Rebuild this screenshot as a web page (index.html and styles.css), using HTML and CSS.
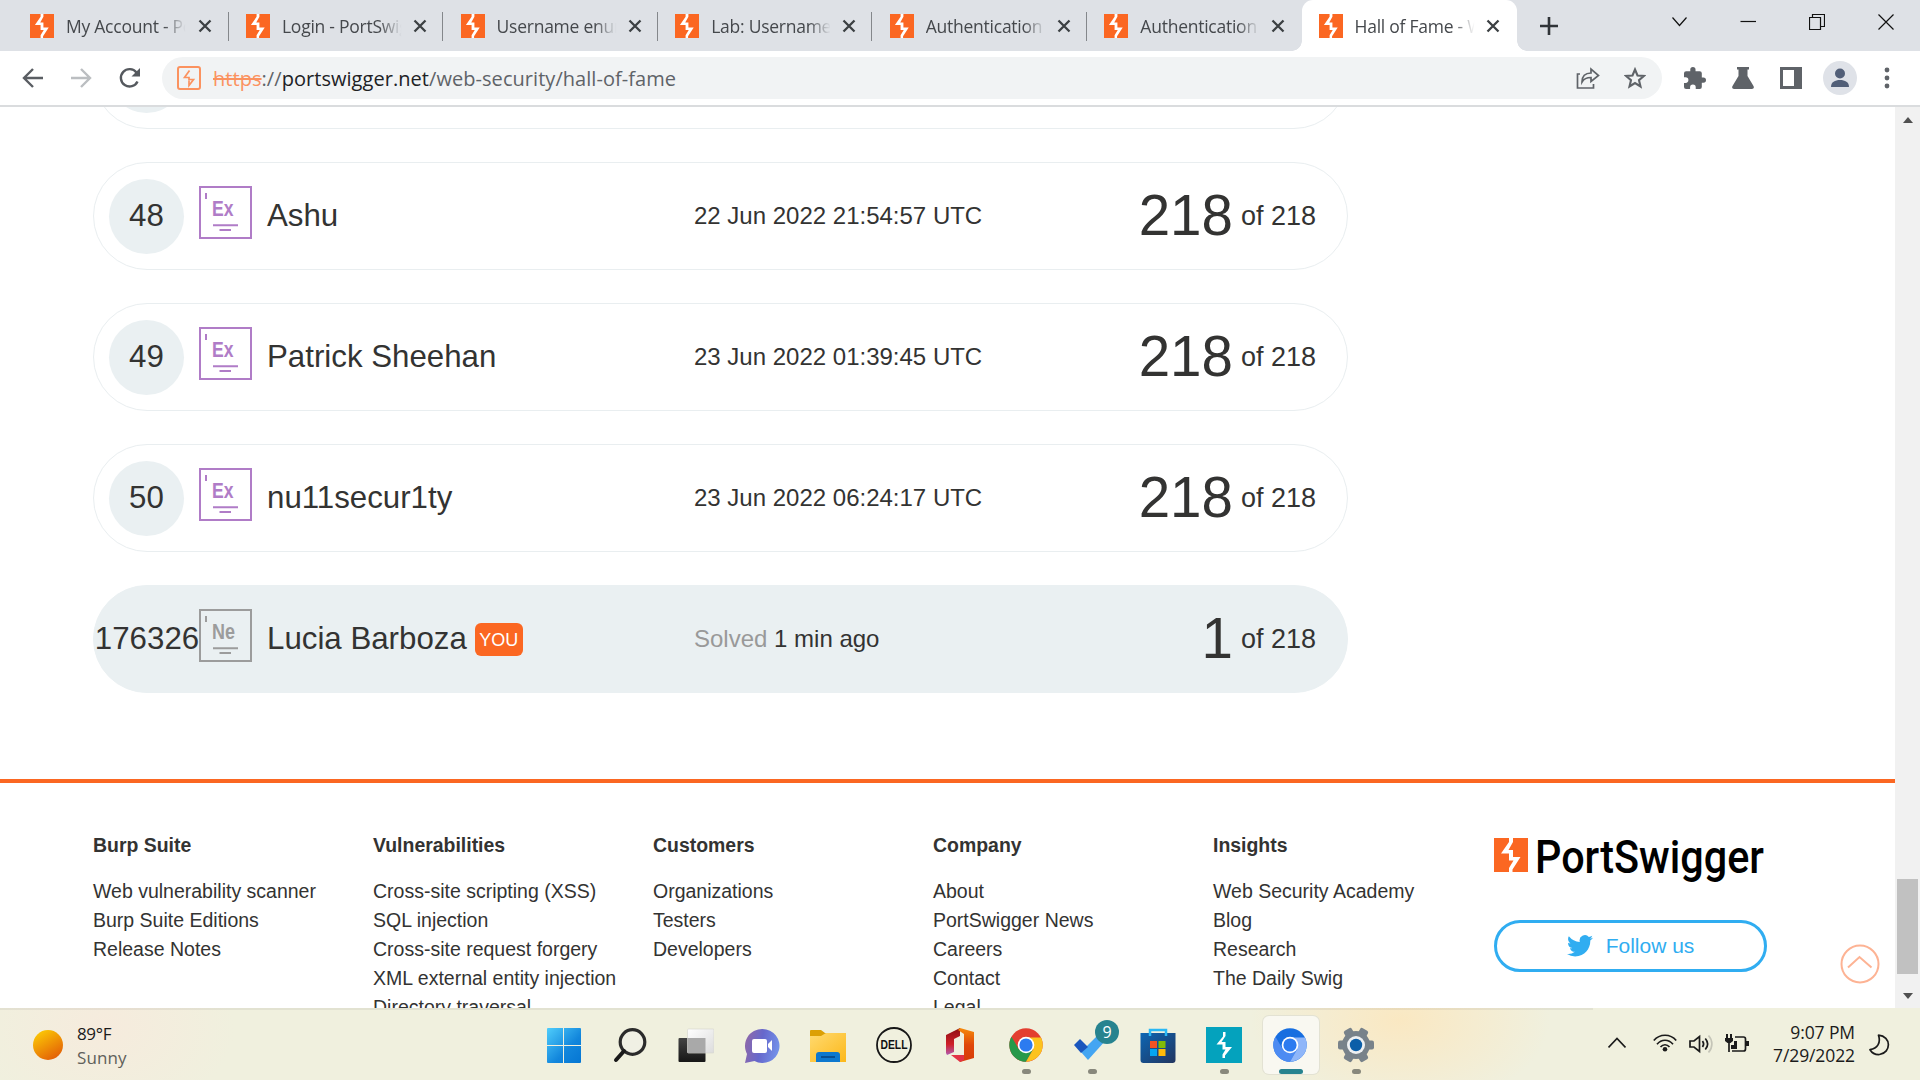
FILE: index.html
```html
<!DOCTYPE html>
<html lang="en">
<head>
<meta charset="utf-8">
<title>Hall of Fame - Web Security Academy</title>
<link rel="stylesheet" href="styles.css">
</head>
<body>
<svg class="defs" width="0" height="0">
  <defs>
    <symbol id="logo" viewBox="0 0 34 34" preserveAspectRatio="none">
      <rect width="34" height="34" fill="#fb6722"/>
      <path fill="#fff" d="M15 0h4v4l-4.500 8H19v7h7.500l-8 12.500V34H15v-4l4.500-7.500H15v-7H7L15 4z"/>
    </symbol>
    <symbol id="close" viewBox="0 0 14 14"><path d="M1.500 1.500l11 11M12.500 1.500l-11 11" stroke="#3c4043" stroke-width="2.300"/></symbol>
    <symbol id="ex" viewBox="0 0 53 53">
      <rect x="1" y="1" width="51" height="51" fill="none" stroke="currentColor" stroke-width="2"/>
      <path fill="currentColor" d="M6 7h2v6H6zM14 38.300h25v2H14zM20.500 43h11.500v2H20.500z"/>
    </symbol>
    <linearGradient id="gsun" x1=".2" y1="0" x2=".8" y2="1"><stop offset="0" stop-color="#fccb05"/><stop offset="1" stop-color="#e25a07"/></linearGradient>
    <linearGradient id="gwin" x1="0" y1="0" x2="1" y2="1"><stop offset="0" stop-color="#4fcdfb"/><stop offset=".6" stop-color="#1286dc"/><stop offset="1" stop-color="#0576d3"/></linearGradient>
    <linearGradient id="gchat" x1="0" y1=".2" x2="1" y2=".4"><stop offset="0" stop-color="#9068a8"/><stop offset=".5" stop-color="#6668cc"/><stop offset="1" stop-color="#7390e8"/></linearGradient>
    <linearGradient id="gfold" x1="0" y1="0" x2="1" y2="1"><stop offset="0" stop-color="#ffda70"/><stop offset="1" stop-color="#fcb81a"/></linearGradient>
    <linearGradient id="gstore" x1="0" y1="0" x2="1" y2="1"><stop offset="0" stop-color="#0c66b4"/><stop offset="1" stop-color="#22355f"/></linearGradient>
    <linearGradient id="goff" x1="0" y1="0" x2="0" y2="1"><stop offset="0" stop-color="#f58a0a"/><stop offset=".5" stop-color="#e0470a"/><stop offset="1" stop-color="#d63c08"/></linearGradient>
    <linearGradient id="goffl" x1="0" y1="0" x2="0" y2="1"><stop offset="0" stop-color="#8c0f14"/><stop offset=".6" stop-color="#cf2028"/><stop offset="1" stop-color="#b25bb0"/></linearGradient>
    <linearGradient id="gtask" x1="0" y1="0" x2="0" y2="1"><stop offset="0" stop-color="#444"/><stop offset="1" stop-color="#161616"/></linearGradient>
    <linearGradient id="gpane" x1="0" y1="0" x2="1" y2="1"><stop offset="0" stop-color="#fff"/><stop offset="1" stop-color="#dcdcdc"/></linearGradient>
  </defs>
</svg>

<header class="tabstrip">
  <div class="tab first"><svg class="fav"><use href="#logo"/></svg><span class="title">My Account - PortSwigger</span><svg class="x"><use href="#close"/></svg></div>
  <div class="tab"><svg class="fav"><use href="#logo"/></svg><span class="title">Login - PortSwigger</span><svg class="x"><use href="#close"/></svg></div>
  <div class="tab"><svg class="fav"><use href="#logo"/></svg><span class="title">Username enumeration</span><svg class="x"><use href="#close"/></svg></div>
  <div class="tab"><svg class="fav"><use href="#logo"/></svg><span class="title">Lab: Username enum</span><svg class="x"><use href="#close"/></svg></div>
  <div class="tab"><svg class="fav"><use href="#logo"/></svg><span class="title">Authentication vuln</span><svg class="x"><use href="#close"/></svg></div>
  <div class="tab last"><svg class="fav"><use href="#logo"/></svg><span class="title">Authentication vuln</span><svg class="x"><use href="#close"/></svg></div>
  <div class="tab active"><svg class="fav"><use href="#logo"/></svg><span class="title">Hall of Fame - Web</span><svg class="x"><use href="#close"/></svg></div>
  <svg class="plus" width="18" height="18" viewBox="0 0 18 18"><path d="M9 0v18M0 9h18" stroke="#303438" stroke-width="2.600"/></svg>
  <div class="winctl">
    <svg width="16" height="16" viewBox="0 0 16 16"><path d="M1.500 3.500l7 8 7-8"/></svg>
    <svg width="16" height="16" viewBox="0 0 16 16"><path d="M.5 7.500h15.500"/></svg>
    <svg width="16" height="16" viewBox="0 0 16 16"><path d="M.5 3.500h11v12H.5zM3.500 3.500v-3h12v12h-4"/></svg>
    <svg width="16" height="16" viewBox="0 0 16 16"><path d="M.5.5l15 15M15.500.5l-15 15"/></svg>
  </div>
</header>

<div class="toolbar">
  <svg class="nav" width="22" height="20" viewBox="0 0 22 20"><path d="M21 10H2M11 1l-9 9 9 9" fill="none" stroke="#5a5e63" stroke-width="2.400"/></svg>
  <svg class="nav" width="22" height="20" viewBox="0 0 22 20"><path d="M1 10h19M11 1l9 9-9 9" fill="none" stroke="#bbbec1" stroke-width="2.400"/></svg>
  <svg class="nav" width="22" height="22" viewBox="0 0 22 22"><path d="M19.500 14.500a8.700 8.700 0 1 1-1-9" fill="none" stroke="#55595e" stroke-width="2.400"/><path d="M22 1v8.500h-8.500z" fill="#55595e"/></svg>
  <div class="omnibox">
    <svg width="24" height="24" viewBox="0 0 24 24"><rect x="1" y="1" width="22" height="22" rx="2" fill="none" stroke="#fb925f" stroke-width="2"/><path d="M12.500 4.500L7.500 11.500h4.500v2h4.500L12 19.500v-5" fill="none" stroke="#fb925f" stroke-width="1.700"/></svg>
    <span class="url"><s>https</s>://<b>portswigger.net</b>/web-security/hall-of-fame</span>
    <svg width="24" height="22" viewBox="0 0 24 22"><path d="M4 7H1.500v14h16v-4M6 15c0-6 3-9 9-9V2l7.500 6.500L15 14.500V10.500c-4 0-7 1-9 4.500z" fill="none" stroke="#5f6368" stroke-width="1.700"/></svg>
    <svg width="22" height="22" viewBox="0 0 22 22"><path d="M11 2.500l2.500 6 6.300.5-4.800 4.200 1.500 6.300L11 16l-5.500 3.500L7 13.200 2.200 9l6.300-.5z" fill="none" stroke="#5f6368" stroke-width="2.100"/></svg>
  </div>
  <div class="actions">
    <svg width="22" height="22" viewBox="2 1 21 21"><path fill="#5f6368" d="M20.500 11H19V7a2 2 0 0 0-2-2h-4V3.500a2.500 2.500 0 0 0-5 0V5H4a2 2 0 0 0-2 2v3.800h1.500a2.700 2.700 0 0 1 0 5.400H2V20a2 2 0 0 0 2 2h3.800v-1.500a2.700 2.700 0 0 1 5.400 0V22H17a2 2 0 0 0 2-2v-4h1.500a2.500 2.500 0 0 0 0-5z"/></svg>
    <svg width="22" height="22" viewBox="0 0 22 22"><path fill="#5f6368" d="M5 0h12v2.500h-1.500V9l6 10c1 2-.2 3-1.500 3H2C.7 22-.5 21 .5 19l6-10V2.500H5z"/></svg>
    <svg width="22" height="22" viewBox="0 0 22 22"><path fill="#5f6368" fill-rule="evenodd" d="M0 0h22v22H0zM3 3v16h11V3z"/></svg>
    <svg width="34" height="34" viewBox="0 0 34 34"><circle cx="17" cy="17" r="17" fill="#dfe2e8"/><circle cx="17" cy="12.500" r="5" fill="#525f78"/><path d="M8 26c0-5 4-7 9-7s9 2 9 7z" fill="#525f78"/></svg>
    <svg width="6" height="22" viewBox="0 0 6 22"><g fill="#5f6368"><circle cx="3" cy="3" r="2.400"/><circle cx="3" cy="11" r="2.400"/><circle cx="3" cy="19" r="2.400"/></g></svg>
  </div>
</div>

<div class="viewport">
  <main class="page">
    <div class="board">
      <div class="row"><div class="rank"></div></div>
      <div class="row"><div class="rank">48</div><svg class="level"><use href="#ex"/><text x="13" y="30" textLength="21.500" lengthAdjust="spacingAndGlyphs">Ex</text></svg><div class="name">Ashu</div><div class="date">22 Jun 2022 21:54:57 UTC</div><div class="count"><span class="big">218</span><span>of 218</span></div></div>
      <div class="row"><div class="rank">49</div><svg class="level"><use href="#ex"/><text x="13" y="30" textLength="21.500" lengthAdjust="spacingAndGlyphs">Ex</text></svg><div class="name">Patrick Sheehan</div><div class="date">23 Jun 2022 01:39:45 UTC</div><div class="count"><span class="big">218</span><span>of 218</span></div></div>
      <div class="row"><div class="rank">50</div><svg class="level"><use href="#ex"/><text x="13" y="30" textLength="21.500" lengthAdjust="spacingAndGlyphs">Ex</text></svg><div class="name">nu11secur1ty</div><div class="date">23 Jun 2022 06:24:17 UTC</div><div class="count"><span class="big">218</span><span>of 218</span></div></div>
      <div class="row you"><div class="rank">176326</div><svg class="level"><use href="#ex"/><text x="13" y="30" textLength="23" lengthAdjust="spacingAndGlyphs">Ne</text></svg><div class="name">Lucia Barboza<span class="tag">YOU</span></div><div class="date"><i>Solved</i> 1 min ago</div><div class="count"><span class="big">1</span><span>of 218</span></div></div>
    </div>
    <footer class="footer">
      <div class="col"><h3>Burp Suite</h3><a>Web vulnerability scanner</a><a>Burp Suite Editions</a><a>Release Notes</a></div>
      <div class="col"><h3>Vulnerabilities</h3><a>Cross-site scripting (XSS)</a><a>SQL injection</a><a>Cross-site request forgery</a><a>XML external entity injection</a><a>Directory traversal</a></div>
      <div class="col"><h3>Customers</h3><a>Organizations</a><a>Testers</a><a>Developers</a></div>
      <div class="col"><h3>Company</h3><a>About</a><a>PortSwigger News</a><a>Careers</a><a>Contact</a><a>Legal</a></div>
      <div class="col"><h3>Insights</h3><a>Web Security Academy</a><a>Blog</a><a>Research</a><a>The Daily Swig</a></div>
      <div class="brand">
        <svg width="273" height="46" viewBox="0 0 273 46"><use href="#logo" width="34" height="34"/><text class="wordmark" x="41" y="34.500" textLength="229" lengthAdjust="spacingAndGlyphs">PortSwigger</text></svg>
        <div class="follow"><svg width="26" height="22" viewBox="0 0 24 20"><path fill="#30adf1" d="M24 2.400a10 10 0 0 1-2.800.8A5 5 0 0 0 23.300.5a10 10 0 0 1-3.100 1.200A4.900 4.900 0 0 0 11.800 6.200 14 14 0 0 1 1.700 1a4.900 4.900 0 0 0 1.500 6.600A5 5 0 0 1 1 7a4.900 4.900 0 0 0 3.900 4.900 5 5 0 0 1-2.200.1 4.900 4.900 0 0 0 4.600 3.400A9.900 9.900 0 0 1 0 17.400a14 14 0 0 0 7.500 2.200c9 0 14-7.500 14-14v-.6A10 10 0 0 0 24 2.400z"/></svg>Follow us</div>
      </div>
    </footer>
    <svg class="totop" width="40" height="40" viewBox="0 0 40 40"><circle cx="20" cy="20" r="18.500" fill="#fff" stroke="#fdb394" stroke-width="2"/><path d="M8 23.500L19.500 13 31.500 23.500" fill="none" stroke="#fdb394" stroke-width="2"/></svg>
  </main>
  <div class="scrollbar"><i class="up"></i><i class="thumb"></i><i class="down"></i></div>
</div>

<div class="taskbar">
  <div class="weather">
    <svg width="30" height="30" viewBox="0 0 30 30"><circle cx="15" cy="15" r="15" fill="url(#gsun)"/></svg>
    <div>89°F<br><span>Sunny</span></div>
  </div>
  <div class="apps">
    <div class="app"><svg viewBox="0 0 36 36"><path fill="url(#gwin)" d="M2 1h15v17H1V2a1 1 0 0 1 1-1zM18 1h16a1 1 0 0 1 1 1v16H18zM1 19h16v17H2a1 1 0 0 1-1-1zM18 19h17v16a1 1 0 0 1-1 1H18z"/></svg></div>
    <div class="app"><svg viewBox="0 0 36 36"><circle cx="20.500" cy="15" r="12.300" fill="#f0f0e4" stroke="#2b2b2b" stroke-width="3.200"/><path d="M12 24l-8 9" stroke="#1a1a1a" stroke-width="4" stroke-linecap="round"/></svg></div>
    <div class="app"><svg viewBox="0 0 36 36"><rect x=".5" y="11" width="27" height="24" rx="1" fill="url(#gtask)"/><rect x="9.500" y="2" width="26.500" height="24" rx="1" fill="url(#gpane)" stroke="#d8d8d0" stroke-width=".7"/><path d="M9.500 11h18v15h-18z" fill="#a9a9a9"/></svg></div>
    <div class="app"><svg viewBox="0 0 36 36"><path fill="url(#gchat)" d="M18.500 2a17 17 0 1 1-8 32L1 36l2-9A17 17 0 0 1 18.500 2z"/><rect x="8" y="12" width="15" height="14" rx="2" fill="#fff"/><path fill="#fff" d="M24 17l4-4v11l-4-4z"/></svg></div>
    <div class="app"><svg viewBox="0 0 36 36"><path fill="#dca005" d="M0 4a1 1 0 0 1 1-1h10l4 3h20v6H0z"/><path fill="url(#gfold)" d="M0 9h11l5-3h20v29H0z"/><path fill="#0c78cf" d="M6 35v-7a3 3 0 0 1 3-3h18a3 3 0 0 1 3 3v7z"/><path d="M11 30h14" stroke="#064f94" stroke-width="2"/></svg></div>
    <div class="app"><svg viewBox="0 0 36 36"><circle cx="18" cy="18" r="17" fill="none" stroke="#171717" stroke-width="1.800"/><text x="4.500" y="22.200" class="dell" textLength="27" lengthAdjust="spacingAndGlyphs">DELL</text></svg></div>
    <div class="app"><svg viewBox="0 0 36 36"><path fill="url(#goffl)" d="M18 1v8l-6 3v13l-7 3-1-2V8z"/><path fill="url(#goff)" d="M18 1l14 4v26l-14 4-1-3 5-2V7l-6-4z"/><path fill="#e23346" d="M9 28h13v5l-4 2z"/></svg></div>
    <div class="app on"><svg viewBox="0 0 36 36"><circle cx="18" cy="18" r="16.700" fill="#e33e30"/><path fill="#26994a" d="M3.500 9.700A16.700 16.700 0 0 0 18 34.700l7.200-12.500H10.800z"/><path fill="#fcc31e" d="M33 10.500H18l7.200 11.700L18 34.700A16.700 16.700 0 0 0 33 10.500z"/><circle cx="18" cy="18" r="8.300" fill="#fff"/><circle cx="18" cy="18" r="6.600" fill="#2c7bf0"/></svg></div>
    <div class="app on"><svg viewBox="0 0 36 36"><path fill="#43a5f2" d="M7 25l18-18 7 6-18 20z"/><path fill="#1a56bd" d="M0 18l6-6 8 8-7 6z"/></svg><b class="badge">9</b></div>
    <div class="app"><svg viewBox="0 0 36 36"><path d="M10 8V3h16v5" fill="none" stroke="#2ab8f5" stroke-width="2.500"/><path fill="url(#gstore)" d="M.5 6h35v27a3 3 0 0 1-3 3h-29a3 3 0 0 1-3-3z"/><path d="M10 6v3M26 6v3" stroke="#2ab8f5" stroke-width="2.500"/><path fill="#f35325" d="M10 14h7v7h-7z"/><path fill="#81bc06" d="M18.500 14h7v7h-7z"/><path fill="#05a6f0" d="M10 22h7v7h-7z"/><path fill="#ffba08" d="M18.500 22h7v7h-7z"/></svg></div>
    <div class="app on"><svg viewBox="0 0 36 36"><path fill="#04a2bd" d="M0 0h36v36H0z"/><path fill="#fff" d="M17 5h2.500v4l-4 6h4v5h6.500l-7 8.500V31H16.500v-3.500l3-5H16.500V17.500H10.500l6.500-8z"/></svg></div>
    <div class="app on current"><svg viewBox="0 0 36 36"><circle cx="18" cy="18" r="16.700" fill="#176ee0"/><path fill="#4d8bf2" d="M3.500 9.700A16.700 16.700 0 0 0 18 34.700l7.200-12.500H10.800z"/><path fill="#8fb6f9" d="M33 10.500H18l7.200 11.700L18 34.700A16.700 16.700 0 0 0 33 10.500z"/><circle cx="18" cy="18" r="8.300" fill="#fff"/><circle cx="18" cy="18" r="6.600" fill="#2c7bf0"/></svg></div>
    <div class="app on"><svg viewBox="0 0 36 36"><g fill="#78828a"><circle cx="18" cy="18" r="14"/><rect x="13.500" y="0" width="9" height="36" rx="2" transform="rotate(30 18 18)"/><rect x="13.500" y="0" width="9" height="36" rx="2" transform="rotate(90 18 18)"/><rect x="13.500" y="0" width="9" height="36" rx="2" transform="rotate(150 18 18)"/></g><circle cx="18" cy="18" r="9" fill="#eef0f2"/><circle cx="18" cy="18" r="6.200" fill="#0b5ea8"/></svg></div>
  </div>
  <div class="tray">
    <svg width="18" height="12" viewBox="0 0 18 12"><path d="M.5 10.500L9 1.500l8.500 9"/></svg>
    <svg width="24" height="18" viewBox="0 0 24 18"><path d="M.8 6.500c6-7 16.500-7 22.400 0M4 10.200c4.500-5.300 11.500-5.300 16 0M7.500 13c2.500-3 6.500-3 9 0"/><circle cx="12" cy="15.300" r="2.300"/></svg>
    <svg width="24" height="20" viewBox="0 0 24 20"><path d="M1 7v6h4l5.500 4.500v-15L5 7zM13.500 7c1.500 2 1.500 4 0 6M16.300 4.500c3 3.500 3 7.500 0 11"/><path class="faint" d="M19.500 1.500c4.500 5 4.500 12 0 17"/></svg>
    <svg width="24" height="20" viewBox="0 0 24 20"><path d="M10 3h8.500a2 2 0 0 1 2 2v10a2 2 0 0 1-2 2H7M4 8v10"/><path class="solid" d="M0 4h1V0h2v4h2V0h2v4h1v3L5.500 9h-3L0 7zM6 15v-4h3V7h3v8zM21 7h3v5h-3z"/></svg>
  </div>
  <div class="clock"><span>9:07 PM</span><span>7/29/2022</span></div>
  <svg class="moon" width="21" height="22" viewBox="0 0 21 22"><path d="M9.500 1.200c13 1 13 17.500 1 19.300-4.500.3-7.500-1.500-9.500-4.800C8.500 14.500 12 9 9.500 1.200z" fill="none" stroke="#1b1b1b" stroke-width="1.700" stroke-linejoin="round"/></svg>
</div>
</body>
</html>
```

FILE: styles.css
```css
* { box-sizing: border-box; }
body {
  margin: 0;
  width: 1920px;
  height: 1080px;
  overflow: hidden;
  display: flex;
  flex-direction: column;
  background: #fff;
  color: #333332;
  font-family: "Liberation Sans", Arial, sans-serif;
}
.defs { position: absolute; }
svg { display: block; flex: none; }

/* browser tabs */
.tabstrip {
  height: 51px;
  flex: none;
  display: flex;
  background: #dee1e6;
  padding-left: 14px;
  font-family: "Open Sans", "Noto Sans", sans-serif;
}
.tab {
  width: 214.600px;
  display: flex;
  align-items: center;
  padding-left: 17.400px;
  position: relative;
}
.tab.first { padding-left: 16px; }
.tab::after {
  content: "";
  position: absolute;
  right: 0;
  top: 12px;
  width: 1px;
  height: 29px;
  background: #84878b;
}
.tab.last::after { display: none; }
.tab.active {
  background: #fff;
  border-radius: 11px 11px 0 0;
  width: 215px;
  padding-left: 17px;
}
.tab.active::before,
.tab.active::after {
  content: "";
  position: absolute;
  top: auto;
  bottom: 0;
  width: 10px;
  height: 10px;
}
.tab.active::before { left: -10px; background: radial-gradient(circle at 0 0, #fff0 9.500px, #fff 10px); }
.tab.active::after { right: -10px; background: radial-gradient(circle at 100% 0, #fff0 9.500px, #fff 10px); }
.fav { width: 24px; height: 24px; }
.title {
  width: 122px;
  margin-left: 12px;
  overflow: hidden;
  white-space: nowrap;
  font-size: 17.500px;
  letter-spacing: -0.250px;
  color: #45484c;
  -webkit-mask-image: linear-gradient(90deg, #000 80%, transparent 98%);
  mask-image: linear-gradient(90deg, #000 80%, transparent 98%);
}
.x { width: 14px; height: 14px; margin-left: 9px; }
.first .x { margin-left: 10px; }
.plus { margin: 17px 0 0 23px; }
.winctl {
  display: flex;
  gap: 53px;
  margin: 14px 0 0 auto;
  padding-right: 26px;
}
.winctl path { fill: none; stroke: #111; stroke-width: 1.200; }

/* toolbar */
.toolbar {
  height: 56px;
  flex: none;
  display: flex;
  align-items: center;
  padding-left: 22px;
  border-bottom: 2px solid #dadcde;
}
.nav { margin-right: 26px; }
.nav + .nav + .nav { margin-right: 22px; }
.omnibox {
  width: 1500px;
  height: 42px;
  border-radius: 21px;
  background: #f1f3f4;
  display: flex;
  align-items: center;
  padding: 0 16px 0 15px;
}
.url {
  flex: 1;
  margin: 1px 0 0 12px;
  font: 20px/28px "Open Sans", "Noto Sans", sans-serif;
  letter-spacing: 0.050px;
  color: #5f6368;
}
.url s { color: #fb925f; }
.url b { color: #202124; font-weight: 400; }
.omnibox svg:last-child { margin-left: 24px; }
.actions { display: flex; align-items: center; margin-left: 22px; }
.actions svg { margin-right: 26px; }
.actions svg:nth-child(3) { margin-right: 21px; }
.actions svg:nth-child(4) { margin-right: 27px; }

/* page */
.viewport { height: 901px; flex: none; display: flex; overflow: hidden; }
.page { position: relative; width: 1895px; height: 901px; overflow: hidden; }
.board {
  margin: -86px 0 0 93px;
  width: 1255px;
  display: flex;
  flex-direction: column;
  gap: 33px;
}
.row {
  height: 108px;
  border: 1px solid #e9eef0;
  border-radius: 54px;
  display: flex;
  align-items: center;
  padding: 0 31px 0 15px;
  white-space: nowrap;
}
.rank {
  width: 75px;
  height: 75px;
  margin-top: 1px;
  padding-bottom: 2px;
  border-radius: 50%;
  background: #eaf0f2;
  display: flex;
  align-items: center;
  justify-content: center;
  font-size: 31.250px;
}
.you .rank { padding-left: 1px; }
.level { width: 53px; height: 53px; margin: -7px 15px 0; color: #b07cc7; }
.level text { font: bold 22px "Liberation Sans", Arial, sans-serif; fill: currentColor; }
.name { width: 427px; font-size: 31.250px; display: flex; align-items: center; }
.date { font-size: 24px; }
.date i { font-style: normal; color: #999; }
.count { margin-left: auto; display: flex; align-items: center; gap: 8px; font-size: 27px; }
.big { font-size: 56.500px; line-height: 60px; }
.row.you { background: #eaf0f2; border-color: #eaf0f2; }
.you .level { color: #9c9c9c; }
.tag {
  width: 48px;
  height: 33px;
  margin: 1px 0 0 8px;
  border-radius: 6px;
  background: #fb6722;
  color: #fff;
  font-size: 18px;
  line-height: 34px;
  text-align: center;
}

/* footer */
.footer {
  margin-top: 86px;
  border-top: 4px solid #fb6722;
  padding: 48px 0 0 93px;
  display: grid;
  grid-template-columns: repeat(5, 280px) 1fr;
}
.col h3 { margin: 0 0 17px; font-size: 19.450px; line-height: 29px; }
.col a { display: block; font-size: 19.500px; line-height: 29px; white-space: nowrap; }
.brand { padding: 7px 0 0 1px; }
.wordmark { font: 500 46px Roboto, sans-serif; fill: #000; }
.follow {
  width: 273px;
  height: 52px;
  margin-top: 36px;
  border: 3px solid #30adf1;
  border-radius: 26px;
  display: flex;
  align-items: center;
  justify-content: center;
  gap: 13px;
  color: #30adf1;
  font-size: 21px;
}
.totop { position: absolute; left: 1840px; top: 837px; }

.scrollbar {
  width: 25px;
  background: #f1f1f1;
  display: flex;
  flex-direction: column;
  align-items: center;
}
.up { margin-top: 10px; border: 5.500px solid transparent; border-top: 0; border-bottom: 6px solid #505050; }
.thumb { margin-top: 756px; width: 21px; height: 95px; background: #c1c1c1; }
.down { margin-top: 19px; border: 5.500px solid transparent; border-bottom: 0; border-top: 6px solid #505050; }

/* taskbar */
.taskbar {
  height: 72px;
  flex: none;
  display: flex;
  position: relative;
  background:
    linear-gradient(#0000000f, #0000000f) 0 0 / 1593px 2px no-repeat,
    radial-gradient(ellipse 150px 90px at 1400px 12px, #fae8c2, #fae8c200),
    radial-gradient(ellipse 130px 90px at 105px 20px, #f6ebdd, #f6ebdd00),
    #f0f0de;
  font-family: "Open Sans", "Noto Sans", sans-serif;
  font-size: 17.500px;
  line-height: 24px;
  color: #1b1b1b;
}
.weather { width: 531px; padding: 14px 0 0 33px; display: flex; gap: 14px; letter-spacing: -0.350px; }
.weather svg { margin-top: 8px; }
.weather div { font-size: 17px; }
.weather span { color: #60605a; letter-spacing: 0.100px; }
.apps { display: flex; }
.app { width: 66px; display: flex; justify-content: center; padding-top: 19px; position: relative; }
.app svg { width: 36px; height: 36px; position: relative; }
.app.on::after {
  content: "";
  position: absolute;
  left: 29px;
  top: 61px;
  width: 9px;
  height: 5px;
  border-radius: 2.500px;
  background: #88887c;
}
.app.current::before {
  content: "";
  position: absolute;
  left: 6px;
  top: 8px;
  width: 56px;
  height: 58px;
  border-radius: 6px;
  background: #f9f8f1;
  box-shadow: 0 0 0 1px #e3e2d3;
}
.app.current::after { left: 22px; width: 24px; background: #27838f; }
.badge {
  position: absolute;
  left: 36px;
  top: 12px;
  width: 24px;
  height: 24px;
  border-radius: 50%;
  background: #27838f;
  color: #fff;
  font-weight: 400;
  font-size: 16px;
  text-align: center;
}
.dell { font: bold 12px "Liberation Sans", Arial, sans-serif; fill: #111; }
.tray { margin-left: 219px; display: flex; gap: 12px; padding-top: 26px; }
.tray svg:first-child { margin: 3px 15px 0 0; }
.tray path { fill: none; stroke: #1b1b1b; stroke-width: 1.700; }
.tray circle, .tray .solid { fill: #1b1b1b; stroke: none; }
.tray .faint { stroke: #c5c5b8; }
.clock { margin-left: auto; padding-top: 13px; width: 100px; text-align: right; line-height: 23px; letter-spacing: -0.100px; }
.clock span { display: block; }
.moon { margin: 26px 30px 0 14px; }
```
